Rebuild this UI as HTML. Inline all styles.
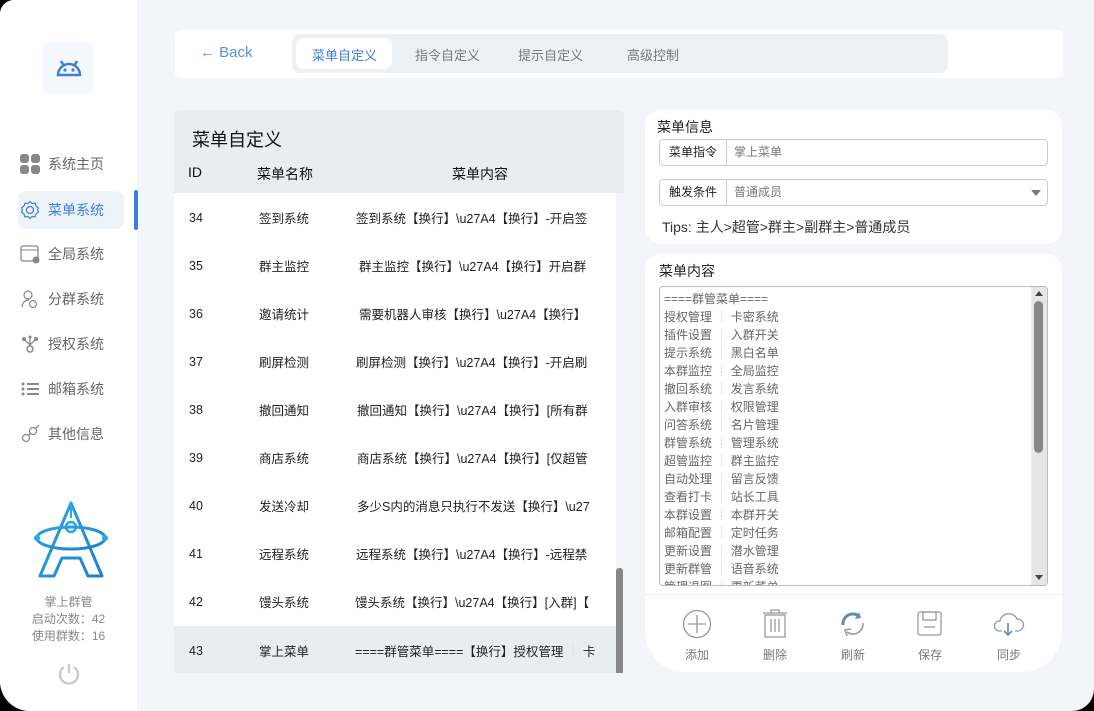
<!DOCTYPE html>
<html><head><meta charset="utf-8"><style>
*{margin:0;padding:0;box-sizing:border-box}
body{width:1094px;height:711px;background:#000;font-family:"Liberation Sans","Noto Sans CJK SC",sans-serif;position:relative;overflow:hidden;color:#222}
.main{position:absolute;left:0;top:0;width:1094px;height:711px;background:#f3f5f8;border-radius:14px 0 22px 30px}
.side{position:absolute;left:0;top:0;width:137px;height:711px;background:#fff;border-radius:14px 0 0 30px}
.abs{position:absolute}
.nav{position:absolute;left:18px;width:106px;height:38px;font-size:14px;color:#666;display:flex;align-items:center;padding-left:2px}
.nav svg{margin-right:8px}
.card{position:absolute;background:#fff;border-radius:12px}
.row{position:absolute;left:174px;width:442px;height:48px;font-size:12.5px;color:#222}
.row span{position:absolute;top:15px}
.row span.i{top:18px}
.row span.n{top:15px}
.fld{position:absolute;left:659px;width:389px;height:27px;border:1px solid #ccc;border-radius:4px;background:#fff;font-size:12px}
.fld .l{position:absolute;left:0;top:0;width:67px;height:25px;border-right:1px solid #ccc;line-height:25px;text-align:center;color:#222}
.fld .v{position:absolute;left:74px;top:0;line-height:25px;color:#777}
.ta{position:absolute;left:659px;top:286px;width:389px;height:300px;border:1px solid #bbb;border-radius:4px;background:#fff;overflow:hidden;font-size:12px;color:#666;line-height:18px;padding:3px 0 0 4px}
.btn{position:absolute;top:608px;width:60px;text-align:center;font-size:12px;color:#777}
.btn div{height:32px;display:flex;justify-content:center;align-items:center;margin-bottom:6px}
</style></head><body>
<div class="main"></div>
<div class="side">
  <div class="abs" style="left:42px;top:42px;width:52px;height:52px;border-radius:8px;background:#f4f7fb"></div>
  <svg class="abs" style="left:55px;top:58px" width="28" height="20" viewBox="0 0 28 20"><path d="M3 17 A11 11 0 0 1 25 17 Z" fill="none" stroke="#3d7fe0" stroke-width="2.5"/><path d="M6 3 L9 8 M22 3 L19 8" stroke="#3d7fe0" stroke-width="2.5"/><circle cx="10" cy="12" r="1.6" fill="#3d7fe0"/><circle cx="18" cy="12" r="1.6" fill="#3d7fe0"/></svg>
  <div class="nav" style="top:145px"><svg width="20" height="20"><rect x="0" y="0" width="9" height="9" rx="3" fill="#888"/><rect x="11" y="0" width="9" height="9" rx="3" fill="#888"/><rect x="0" y="11" width="9" height="9" rx="3" fill="#888"/><rect x="11" y="11" width="9" height="9" rx="3" fill="#888"/></svg>系统主页</div>
  <div class="nav" style="top:191px;background:#eef3fa;border-radius:8px;color:#3d7fe0"><svg width="20" height="20" viewBox="0 0 20 20"><circle cx="10" cy="10" r="3.5" fill="none" stroke="#3d7fe0" stroke-width="1.3"/><path d="M10 1.5 L12 3.5 L15 3 L16 6 L18.5 8 L17.5 10 L18.5 12 L16 14 L15 17 L12 16.5 L10 18.5 L8 16.5 L5 17 L4 14 L1.5 12 L2.5 10 L1.5 8 L4 6 L5 3 L8 3.5 Z" fill="none" stroke="#3d7fe0" stroke-width="1.2"/></svg>菜单系统</div>
  <div class="abs" style="left:134px;top:190px;width:4px;height:40px;border-radius:2px;background:#3d7fe0"></div>
  <div class="nav" style="top:235px"><svg width="20" height="20"><rect x="1" y="2" width="17" height="15" rx="2" fill="none" stroke="#888" stroke-width="1.3"/><line x1="1" y1="6" x2="18" y2="6" stroke="#888"/><circle cx="16" cy="16" r="3.5" fill="#888"/></svg>全局系统</div>
  <div class="nav" style="top:280px"><svg width="20" height="20"><circle cx="8" cy="6" r="4" fill="none" stroke="#888" stroke-width="1.2"/><path d="M2 18 Q3 11 9 11" fill="none" stroke="#888" stroke-width="1.2"/><circle cx="13" cy="15" r="3.5" fill="none" stroke="#888" stroke-width="1.2"/></svg>分群系统</div>
  <div class="nav" style="top:325px"><svg width="20" height="20"><circle cx="4" cy="5" r="2" fill="#888"/><circle cx="16" cy="5" r="2" fill="#888"/><circle cx="10" cy="3" r="1.5" fill="#888"/><path d="M4 5 L10 11 L16 5 M10 3 L10 11" stroke="#888" stroke-width="1.3" fill="none"/><circle cx="10" cy="15" r="3" fill="none" stroke="#888" stroke-width="1.5"/></svg>授权系统</div>
  <div class="nav" style="top:370px"><svg width="20" height="20"><g fill="#888"><circle cx="3" cy="5" r="1.5"/><circle cx="3" cy="10" r="1.5"/><circle cx="3" cy="15" r="1.5"/><rect x="7" y="4" width="12" height="2"/><rect x="7" y="9" width="12" height="2"/><rect x="7" y="14" width="12" height="2"/></g></svg>邮箱系统</div>
  <div class="nav" style="top:415px"><svg width="20" height="20"><circle cx="6" cy="14" r="3.5" fill="none" stroke="#888" stroke-width="1.3"/><circle cx="13" cy="7" r="3.5" fill="none" stroke="#888" stroke-width="1.3"/><path d="M8 12 L11 9 M16 4 L19 1" stroke="#888" stroke-width="1.3"/></svg>其他信息</div>
  <svg class="abs" style="left:32px;top:500px" width="78" height="80" viewBox="0 0 78 80"><defs><linearGradient id="g" x1="0" y1="0" x2="1" y2="1"><stop offset="0" stop-color="#2aa8e0"/><stop offset="1" stop-color="#1f7fd0"/></linearGradient></defs><path d="M39 3 L8 76 L22 76 L30 58 L48 58 L56 76 L70 76 Z" fill="none" stroke="url(#g)" stroke-width="3" stroke-linejoin="round"/><path d="M39 3 L39 18" stroke="#2aa8e0" stroke-width="2"/><circle cx="39" cy="27" r="5" fill="none" stroke="#2aa8e0" stroke-width="2.5"/><ellipse cx="39" cy="38" rx="34" ry="11" fill="none" stroke="url(#g)" stroke-width="3"/><circle cx="5" cy="38" r="3" fill="#2aa8e0"/><circle cx="73" cy="38" r="3" fill="#2aa8e0"/></svg>
  <div class="abs" style="left:0;width:137px;top:594px;text-align:center;font-size:12px;color:#888;line-height:17px">掌上群管<br>启动次数：42<br>使用群数：16</div>
  <svg class="abs" style="left:57px;top:662px" width="24" height="24" viewBox="0 0 24 24"><path d="M7 5 A9 9 0 1 0 17 5" fill="none" stroke="#ccc" stroke-width="2.5"/><line x1="12" y1="2" x2="12" y2="11" stroke="#ccc" stroke-width="2.5"/></svg>
</div>

<div class="card" style="left:175px;top:30px;width:888px;height:48px;border-radius:6px"></div>
<div class="abs" style="left:200px;top:44px;font-size:15px;color:#5a8fe0">← Back</div>
<div class="abs" style="left:292px;top:34px;width:656px;height:39px;border-radius:8px;background:#eef1f4"></div>
<div class="abs" style="left:296px;top:38px;width:96px;height:31px;border-radius:8px;background:#fff"></div>
<div class="abs" style="left:312px;top:45px;font-size:13px;color:#3d7fe0">菜单自定义</div>
<div class="abs" style="left:415px;top:45px;font-size:13px;color:#777">指令自定义</div>
<div class="abs" style="left:518px;top:45px;font-size:13px;color:#777">提示自定义</div>
<div class="abs" style="left:627px;top:45px;font-size:13px;color:#777">高级控制</div>

<div class="abs" style="left:174px;top:110px;width:450px;height:563px;background:#fff;border-radius:6px 6px 0 0;overflow:hidden">
  <div class="abs" style="left:0;top:0;width:450px;height:83px;background:#e9edf0"></div>
  <div class="abs" style="left:18px;top:16px;font-size:18px;color:#111">菜单自定义</div>
  <div class="abs" style="left:14px;top:54px;font-size:14px;color:#111">ID</div>
  <div class="abs" style="left:83px;top:54px;font-size:14px;color:#111">菜单名称</div>
  <div class="abs" style="left:278px;top:54px;font-size:14px;color:#111">菜单内容</div>
  <div class="abs" style="left:0;top:516px;width:442px;height:47px;background:#e9edf0"></div>
  <div class="abs" style="left:442px;top:83px;width:8px;height:480px;background:#f3f5f8"></div>
  <div class="abs" style="left:442px;top:458px;width:7px;height:105px;background:#888;border-radius:3px 3px 0 0"></div>
</div>
<div class="row" style="top:193px"><span class="i" style="left:15px">34</span><span class="n" style="left:85px">签到系统</span><span style="left:182px">签到系统【换行】\u27A4【换行】-开启签</span></div>
<div class="row" style="top:241px"><span class="i" style="left:15px">35</span><span class="n" style="left:85px">群主监控</span><span style="left:185px">群主监控【换行】\u27A4【换行】开启群</span></div>
<div class="row" style="top:289px"><span class="i" style="left:15px">36</span><span class="n" style="left:85px">邀请统计</span><span style="left:185px">需要机器人审核【换行】\u27A4【换行】</span></div>
<div class="row" style="top:337px"><span class="i" style="left:15px">37</span><span class="n" style="left:85px">刷屏检测</span><span style="left:182px">刷屏检测【换行】\u27A4【换行】-开启刷</span></div>
<div class="row" style="top:385px"><span class="i" style="left:15px">38</span><span class="n" style="left:85px">撤回通知</span><span style="left:183px">撤回通知【换行】\u27A4【换行】[所有群</span></div>
<div class="row" style="top:433px"><span class="i" style="left:15px">39</span><span class="n" style="left:85px">商店系统</span><span style="left:183px">商店系统【换行】\u27A4【换行】[仅超管</span></div>
<div class="row" style="top:481px"><span class="i" style="left:15px">40</span><span class="n" style="left:85px">发送冷却</span><span style="left:183px">多少S内的消息只执行不发送【换行】\u27</span></div>
<div class="row" style="top:529px"><span class="i" style="left:15px">41</span><span class="n" style="left:85px">远程系统</span><span style="left:182px">远程系统【换行】\u27A4【换行】-远程禁</span></div>
<div class="row" style="top:577px"><span class="i" style="left:15px">42</span><span class="n" style="left:85px">馒头系统</span><span style="left:181px">馒头系统【换行】\u27A4【换行】[入群]【</span></div>
<div class="row" style="top:626px"><span class="i" style="left:15px">43</span><span class="n" style="left:85px">掌上菜单</span><span style="left:181px">====群管菜单====【换行】授权管理 <span style="position:static;color:#ccc">┊</span> 卡</span></div>

<div class="card" style="left:645px;top:110px;width:417px;height:134px;border-radius:16px"></div>
<div class="abs" style="left:657px;top:117px;font-size:14px;color:#222">菜单信息</div>
<div class="fld" style="top:139px"><div class="l">菜单指令</div><div class="v">掌上菜单</div></div>
<div class="fld" style="top:179px"><div class="l">触发条件</div><div class="v">普通成员</div><div class="abs" style="right:6px;top:10px;border:5px solid transparent;border-top:6px solid #777;border-bottom:0"></div></div>
<div class="abs" style="left:662px;top:217px;font-size:14px;color:#333">Tips: 主人>超管>群主>副群主>普通成员</div>

<div class="card" style="left:645px;top:254px;width:417px;height:418px;border-radius:16px 16px 40px 40px"></div>
<div class="abs" style="left:645px;top:594px;width:417px;height:1px;background:#eef0f2"></div>
<div class="abs" style="left:659px;top:261px;font-size:14px;color:#222">菜单内容</div>
<div class="ta">====群管菜单====<br>授权管理 <span style="color:#bbb">┊</span> 卡密系统<br>插件设置 <span style="color:#bbb">┊</span> 入群开关<br>提示系统 <span style="color:#bbb">┊</span> 黑白名单<br>本群监控 <span style="color:#bbb">┊</span> 全局监控<br>撤回系统 <span style="color:#bbb">┊</span> 发言系统<br>入群审核 <span style="color:#bbb">┊</span> 权限管理<br>问答系统 <span style="color:#bbb">┊</span> 名片管理<br>群管系统 <span style="color:#bbb">┊</span> 管理系统<br>超管监控 <span style="color:#bbb">┊</span> 群主监控<br>自动处理 <span style="color:#bbb">┊</span> 留言反馈<br>查看打卡 <span style="color:#bbb">┊</span> 站长工具<br>本群设置 <span style="color:#bbb">┊</span> 本群开关<br>邮箱配置 <span style="color:#bbb">┊</span> 定时任务<br>更新设置 <span style="color:#bbb">┊</span> 潜水管理<br>更新群管 <span style="color:#bbb">┊</span> 语音系统<br>管理退图 <span style="color:#bbb">┊</span> 更新菜单
  <div class="abs" style="right:0;top:0;width:16px;height:298px;background:#e6e6e6"></div>
  <div class="abs" style="right:4px;top:14px;width:9px;height:152px;background:#888;border-radius:5px"></div>
  <div class="abs" style="right:4px;top:4px;border:4px solid transparent;border-bottom:5px solid #444;border-top:0"></div>
  <div class="abs" style="right:4px;bottom:5px;border:4px solid transparent;border-top:5px solid #444;border-bottom:0"></div>
</div>
<div class="btn" style="left:667px"><div><svg width="30" height="30"><circle cx="15" cy="15" r="13.5" fill="none" stroke="#999" stroke-width="1.3"/><path d="M15 6 V24 M6 15 H24" stroke="#999" stroke-width="1.3"/></svg></div>添加</div>
<div class="btn" style="left:745px"><div><svg width="26" height="30"><path d="M1 4 H25 M9 4 V1 H17 V4" stroke="#999" stroke-width="1.3" fill="none"/><rect x="3" y="6" width="20" height="22" fill="none" stroke="#999" stroke-width="1.3"/><path d="M9 10 V23 M13 10 V23 M17 10 V23" stroke="#999" stroke-width="1.3"/></svg></div>删除</div>
<div class="btn" style="left:823px"><div><svg width="28" height="26" viewBox="0 0 28 26"><path d="M4 14 A10 10 0 0 1 20 5" fill="none" stroke="#5f8fb0" stroke-width="3"/><path d="M20 1 L22 7 L16 8" fill="#5f8fb0"/><path d="M24 12 A10 10 0 0 1 8 21" fill="none" stroke="#999" stroke-width="1.5"/><path d="M8 25 L6 19 L12 18" fill="none" stroke="#999" stroke-width="1.5"/></svg></div>刷新</div>
<div class="btn" style="left:900px"><div><svg width="26" height="26"><rect x="1" y="1" width="23" height="23" rx="2" fill="none" stroke="#999" stroke-width="1.3"/><rect x="6" y="1" width="13" height="8" fill="none" stroke="#999" stroke-width="1.3"/><path d="M7 16 H18" stroke="#999" stroke-width="1.3"/></svg></div>保存</div>
<div class="btn" style="left:979px"><div><svg width="32" height="28"><path d="M9 21 H6 A5 5 0 0 1 7 11 A9 9 0 0 1 24 9 A6 6 0 0 1 25 21 H22" fill="none" stroke="#999" stroke-width="1.3"/><path d="M15 13 V25 M11 21 L15 25 L19 21" fill="none" stroke="#5f8fb0" stroke-width="1.6"/></svg></div>同步</div>
</body></html>
